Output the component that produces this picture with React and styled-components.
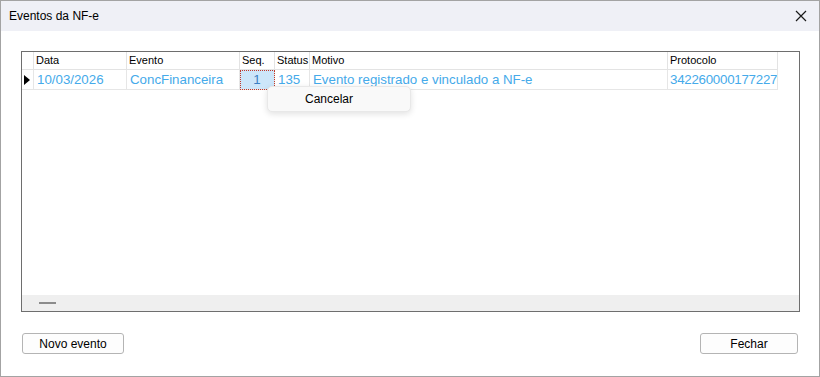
import React from 'react';
import styled, { createGlobalStyle } from 'styled-components';

const GlobalStyle = createGlobalStyle`
  html, body {
    margin: 0;
    padding: 0;
    background: #ffffff;
  }
  body {
    font-family: 'Liberation Sans', Arial, sans-serif;
  }
`;

const COLS = '12px 93px 113px 35px 35px 358px 110px';

const Window = styled.div`
  position: relative;
  box-sizing: border-box;
  width: 820px;
  height: 377px;
  border: 1px solid #a3a3a3;
  background: #ffffff;
  display: flex;
  flex-direction: column;
`;

const TitleBar = styled.div`
  height: 30px;
  flex: none;
  background: #eff0f6;
  display: flex;
  align-items: center;
  justify-content: space-between;
  padding: 0 8px 0 8px;
  font-size: 12px;
  color: #000;
`;

const CloseButton = styled.div`
  width: 16px;
  height: 16px;
  display: flex;
  align-items: center;
  justify-content: center;
  margin-right: 2px;
`;

const Body = styled.div`
  flex: 1;
  display: flex;
  flex-direction: column;
  padding: 20px 21px 0 20px;
`;

const Grid = styled.div`
  position: relative;
  box-sizing: border-box;
  width: 779px;
  height: 261px;
  border: 1px solid #6e6e6e;
  display: flex;
  flex-direction: column;
  background: #fff;
`;

const Row = styled.div`
  display: grid;
  grid-template-columns: ${COLS};
  height: ${p => p.$h}px;
`;

const HeadCell = styled.div`
  box-sizing: border-box;
  border-right: 1px solid #e3e3e3;
  border-bottom: 1px solid #e3e3e3;
  font-size: 11px;
  line-height: 17px;
  padding-left: 2px;
  color: #000;
  white-space: nowrap;
  overflow: hidden;
`;

const Cell = styled.div`
  box-sizing: border-box;
  border-right: 1px solid #e6e6e6;
  border-bottom: 1px solid #e6e6e6;
  font-size: 13.3px;
  line-height: 19px;
  padding-left: ${p => (p.$tight ? 2 : 3)}px;
  letter-spacing: ${p => (p.$tight ? '-0.25px' : 'normal')};
  color: #45aaea;
  white-space: nowrap;
  overflow: hidden;
  display: flex;
  align-items: center;
`;

const SelectedCell = styled(Cell)`
  justify-content: center;
  padding: 0;
  color: #3b7fc4;
  background: #cde6fa;
  outline: 1px dotted #c0392b;
  outline-offset: -1px;
`;

const RowMarker = styled(Cell)`
  padding-left: 2px;
`;

const Spacer = styled.div`
  flex: 1;
`;

const HScroll = styled.div`
  height: 16px;
  background: #efefef;
  display: flex;
  align-items: center;
  padding-left: 17px;
`;

const Thumb = styled.div`
  width: 17px;
  height: 2px;
  background: #8c8c8c;
`;

const ContextMenu = styled.div`
  position: absolute;
  left: 245px;
  top: 34px;
  width: 144px;
  height: 26px;
  box-sizing: border-box;
  background: #f9f9f9;
  border: 1px solid #e8e8e8;
  border-radius: 5px;
  box-shadow: 0 2px 6px rgba(0, 0, 0, 0.12);
  display: flex;
  align-items: center;
  padding-left: 37px;
  font-size: 12px;
  color: #000;
`;

const Footer = styled.div`
  display: flex;
  justify-content: space-between;
  padding: 21px 0 0 1px;
`;

const Button = styled.button`
  box-sizing: border-box;
  width: ${p => p.$w}px;
  height: 21px;
  border: 1px solid #b4b4b4;
  border-radius: 3px;
  background: #fdfdfd;
  font-family: 'Liberation Sans', Arial, sans-serif;
  font-size: 12px;
  color: #000;
  padding: 0;
`;

const rows = [
  { data: '10/03/2026', evento: 'ConcFinanceira', seq: '1', status: '135', motivo: 'Evento registrado e vinculado a NF-e', protocolo: '342260000177227' },
];

export default function App() {
  return (
    <>
      <GlobalStyle />
      <Window>
        <TitleBar>
          <span>Eventos da NF-e</span>
          <CloseButton>
            <svg width="12" height="12" viewBox="0 0 12 12">
              <path d="M1 1 L11 11 M11 1 L1 11" stroke="#1a1a1a" strokeWidth="1.2" />
            </svg>
          </CloseButton>
        </TitleBar>
        <Body>
          <Grid>
            <Row $h={18}>
              <HeadCell />
              <HeadCell>Data</HeadCell>
              <HeadCell>Evento</HeadCell>
              <HeadCell>Seq.</HeadCell>
              <HeadCell>Status</HeadCell>
              <HeadCell>Motivo</HeadCell>
              <HeadCell>Protocolo</HeadCell>
            </Row>
            {rows.map(r => (
              <Row $h={20} key={r.protocolo}>
                <RowMarker>
                  <svg width="6" height="10" viewBox="0 0 6 10">
                    <path d="M0 0 L6 5 L0 10 Z" fill="#000" />
                  </svg>
                </RowMarker>
                <Cell>{r.data}</Cell>
                <Cell>{r.evento}</Cell>
                <SelectedCell>{r.seq}</SelectedCell>
                <Cell>{r.status}</Cell>
                <Cell>{r.motivo}</Cell>
                <Cell $tight>{r.protocolo}</Cell>
              </Row>
            ))}
            <Spacer />
            <HScroll>
              <Thumb />
            </HScroll>
            <ContextMenu>Cancelar</ContextMenu>
          </Grid>
          <Footer>
            <Button $w={102}>Novo evento</Button>
            <Button $w={98}>Fechar</Button>
          </Footer>
        </Body>
      </Window>
    </>
  );
}
